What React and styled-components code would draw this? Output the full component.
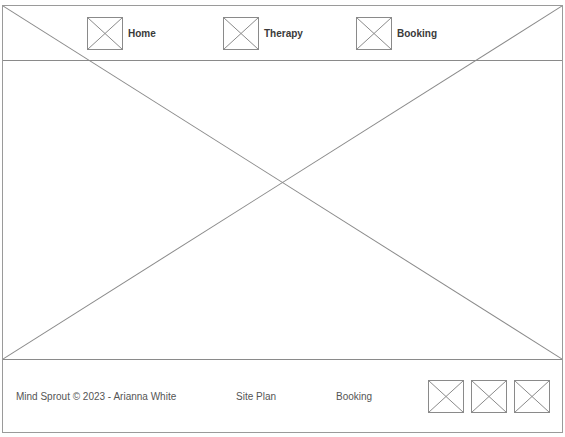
import React from "react";
import styled, { createGlobalStyle } from "styled-components";

const GlobalStyle = createGlobalStyle`
  body {
    margin: 0;
    background: #ffffff;
    font-family: "Liberation Sans", Arial, sans-serif;
  }
`;

function Placeholder({ w, h }) {
  return (
    <PlaceholderBox width={w} height={h} viewBox={`0 0 ${w} ${h}`}>
      <rect x="0.5" y="0.5" width={w - 1} height={h - 1} fill="none" stroke="#8a8a8a" />
      <line x1="0.5" y1="0.5" x2={w - 0.5} y2={h - 0.5} stroke="#8a8a8a" />
      <line x1={w - 0.5} y1="0.5" x2="0.5" y2={h - 0.5} stroke="#8a8a8a" />
    </PlaceholderBox>
  );
}

function App() {
  const nav = [
    { label: "Home", width: 136 },
    { label: "Therapy", width: 133 },
    { label: "Booking", width: 120 },
  ];

  return (
    <>
      <GlobalStyle />
      <Page>
        <Frame>
          <Hero>
            <Header>
              {nav.map((item) => (
                <NavItem key={item.label} $width={item.width}>
                  <Placeholder w={36} h={33} />
                  <NavLabel>{item.label}</NavLabel>
                </NavItem>
              ))}
            </Header>
            <Main />
            <Cross preserveAspectRatio="none" viewBox="0 0 100 100">
              <line x1="0" y1="0" x2="100" y2="100" stroke="#8a8a8a" vectorEffect="non-scaling-stroke" />
              <line x1="100" y1="0" x2="0" y2="100" stroke="#8a8a8a" vectorEffect="non-scaling-stroke" />
            </Cross>
          </Hero>
          <Footer>
            <FooterText $width={220}>Mind Sprout © 2023 - Arianna White</FooterText>
            <FooterText $width={100}>Site Plan</FooterText>
            <FooterText>Booking</FooterText>
            <Socials>
              <Placeholder w={36} h={33} />
              <Placeholder w={36} h={33} />
              <Placeholder w={36} h={33} />
            </Socials>
          </Footer>
        </Frame>
      </Page>
    </>
  );
}
export default App;

const Page = styled.div`
  padding: 5px 0 0 2px;
  width: 565px;
  height: 437px;
  box-sizing: border-box;
`;

const Frame = styled.div`
  width: 561px;
  height: 428px;
  box-sizing: border-box;
  border: 1px solid #9a9a9a;
  display: flex;
  flex-direction: column;
`;

const Hero = styled.div`
  position: relative;
  display: flex;
  flex-direction: column;
  flex: 1;
`;

const Header = styled.div`
  height: 54px;
  border-bottom: 1px solid #8a8a8a;
  display: flex;
  align-items: center;
  padding-left: 84px;
`;

const NavItem = styled.div`
  width: ${(p) => p.$width}px;
  display: flex;
  align-items: center;
  gap: 5px;
`;

const NavLabel = styled.span`
  font-size: 10px;
  font-weight: bold;
  color: #3a3a3a;
`;

const Main = styled.div`
  flex: 1;
`;

const Cross = styled.svg`
  position: absolute;
  inset: 0;
  width: 100%;
  height: 100%;
  pointer-events: none;
`;

const Footer = styled.div`
  height: 72px;
  border-top: 1px solid #8a8a8a;
  display: flex;
  align-items: center;
  padding: 0 12px 0 13px;
`;

const FooterText = styled.span`
  width: ${(p) => (p.$width ? `${p.$width}px` : "auto")};
  font-size: 10px;
  color: #555555;
`;

const Socials = styled.div`
  margin-left: auto;
  display: flex;
  gap: 7px;
`;

const PlaceholderBox = styled.svg`
  display: block;
  flex-shrink: 0;
`;
